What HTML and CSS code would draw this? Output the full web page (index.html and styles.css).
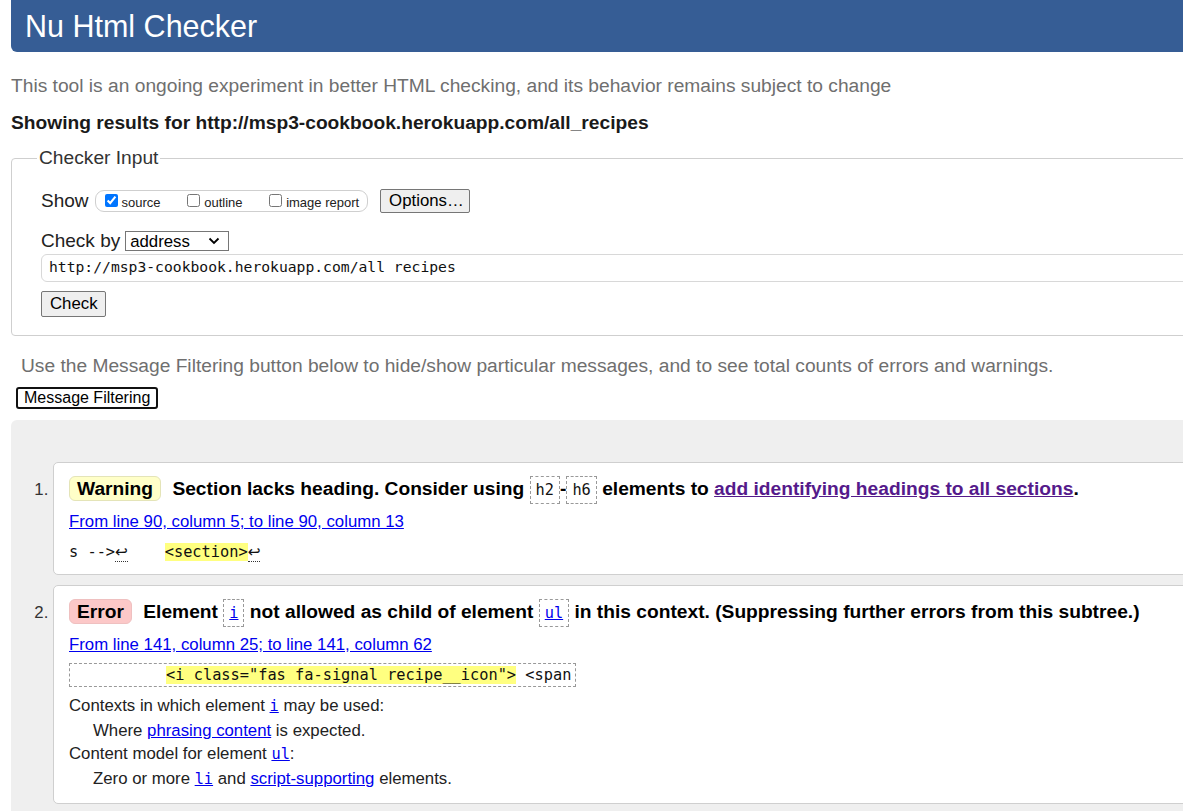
FILE: index.html
```html
<!DOCTYPE html>
<html lang="en">
<head>
<meta charset="utf-8">
<title>Showing results for http://msp3-cookbook.herokuapp.com/all_recipes - Nu Html Checker</title>
<link rel="stylesheet" href="styles.css">
</head>
<body>
<div class="page">
  <header class="masthead"><h1 class="title">Nu Html Checker</h1></header>
  <p class="tagline">This tool is an ongoing experiment in better HTML checking, and its behavior remains subject to change</p>
  <p class="results-for">Showing results for http://msp3-cookbook.herokuapp.com/all_recipes</p>

  <form class="checker-form">
    <fieldset class="checker-input">
      <legend class="legend">Checker Input</legend>
      <div class="row">
        <span class="row-label">Show</span>
        <span class="show-opts">
          <label class="opt"><input type="checkbox" checked>source</label>
          <label class="opt"><input type="checkbox">outline</label>
          <label class="opt"><input type="checkbox">image report</label>
        </span>
        <button type="button" class="btn btn-options">Options…</button>
      </div>
      <div class="row row-checkby">
        <label class="row-label">Check by</label>
        <span class="select-wrap">
          <select class="select"><option>address</option></select>
          <svg class="chev" width="12" height="8" viewBox="0 0 12 8"><path d="M1.5 1.5 L6 6 L10.5 1.5" fill="none" stroke="#000" stroke-width="1.8"/></svg>
        </span>
      </div>
      <input class="url" type="text" value="http://msp3-cookbook.herokuapp.com/all_recipes">
      <button type="button" class="btn btn-check">Check</button>
    </fieldset>
  </form>

  <p class="filter-note">Use the Message Filtering button below to hide/show particular messages, and to see total counts of errors and warnings.</p>
  <button type="button" class="filter-btn">Message Filtering</button>

  <div class="results">
    <ol class="messages">
      <li class="msg">
        <p class="msg-head"><strong class="badge badge-warning">Warning</strong> <span class="msg-text">Section lacks heading. Consider using <code class="chip">h2</code>-<code class="chip">h6</code> elements to <a class="visited" href="#">add identifying headings to all sections</a>.</span></p>
        <p class="location"><a href="#">From line 90, column 5; to line 90, column 13</a></p>
        <p class="extract"><code class="src">s --&gt;<span class="lf">↩</span>    <b class="hl">&lt;section&gt;</b><span class="lf">↩</span></code></p>
      </li>
      <li class="msg">
        <p class="msg-head"><strong class="badge badge-error">Error</strong> <span class="msg-text">Element <code class="chip"><a href="#">i</a></code> not allowed as child of element <code class="chip"><a href="#">ul</a></code> in this context. (Suppressing further errors from this subtree.)</span></p>
        <p class="location"><a href="#">From line 141, column 25; to line 141, column 62</a></p>
        <p class="extract-box"><code class="src">          <b class="hl">&lt;i class="fas fa-signal recipe__icon"&gt;</b> &lt;span</code></p>
        <dl class="details">
          <dt>Contexts in which element <a href="#"><code class="mono">i</code></a> may be used:</dt>
          <dd>Where <a href="#">phrasing content</a> is expected.</dd>
          <dt>Content model for element <a href="#"><code class="mono">ul</code></a>:</dt>
          <dd>Zero or more <a href="#"><code class="mono">li</code></a> and <a href="#">script-supporting</a> elements.</dd>
        </dl>
      </li>
    </ol>
  </div>
</div>
</body>
</html>
```

FILE: styles.css
```css
html {
  overflow: hidden;
}

body {
  margin: 0;
  background: #fff;
  font-family: "Liberation Sans", Arial, sans-serif;
  color: #222;
}

.page {
  width: 1260px;
  padding-left: 11px;
}

.masthead {
  background: #365d95;
  height: 52px;
  border-radius: 0 0 6px 6px;
  padding-left: 14px;
}

.title {
  margin: 0;
  font-size: 30.5px;
  font-weight: normal;
  line-height: 52px;
  color: #fff;
}

.tagline {
  margin: 22px 0 0;
  font-size: 19.2px;
  line-height: 24px;
  color: #6f6f6f;
}

.results-for {
  margin: 13px 0 0;
  font-size: 19.2px;
  line-height: 24px;
  font-weight: bold;
  color: #1a1a1a;
}

.checker-form {
  margin: 11px 0 0;
}

.checker-input {
  margin: 0;
  border: 1px solid #cfcfcf;
  border-radius: 4px;
  padding: 19px 28px 18px 29px;
  min-width: 0;
}

.legend {
  font-size: 19.2px;
  line-height: 24px;
  color: #333;
  padding: 0 2px;
  margin-left: -4px;
}

.row {
  display: flex;
  align-items: center;
  height: 24px;
  gap: 6px;
}

.row-label {
  font-size: 19px;
  line-height: 24px;
  color: #222;
}

.show-opts {
  display: inline-block;
  height: 20px;
  line-height: 20px;
  border: 1px solid #cfcfcf;
  border-radius: 9px;
  padding: 0 8px 0 5px;
  font-size: 13px;
  color: #222;
}

.opt {
  margin-right: 19px;
}

.opt:last-child {
  margin-right: 0;
}

.opt input {
  margin: 3px 4px 3px 4px;
}

.btn {
  font-family: "Liberation Sans", Arial, sans-serif;
  font-size: 16.8px;
  color: #000;
  background: #efefef;
  border: 1px solid #767676;
  border-radius: 2px;
  padding: 0 8px;
  box-sizing: border-box;
}

.btn-options {
  height: 24px;
  width: 90px;
  margin-left: 6px;
}

.row-checkby {
  margin-top: 16px;
  gap: 5px;
}

.select-wrap {
  position: relative;
  display: inline-block;
  height: 20px;
}

.select {
  appearance: none;
  -webkit-appearance: none;
  width: 104px;
  height: 20px;
  box-sizing: border-box;
  border: 1px solid #767676;
  border-radius: 0;
  background: #fff;
  font-family: "Liberation Sans", Arial, sans-serif;
  font-size: 16.8px;
  color: #000;
  padding: 0 0 0 4px;
  margin: 0;
  display: block;
}

.chev {
  position: absolute;
  right: 9px;
  top: 6px;
  pointer-events: none;
}

.url {
  display: block;
  box-sizing: border-box;
  width: 100%;
  height: 28px;
  margin: 1px 0 0;
  border: 1px solid #d8d8d8;
  border-radius: 6px;
  padding: 0 7px 3px;
  font-family: "DejaVu Sans Mono", "Liberation Mono", monospace;
  font-size: 14.7px;
  line-height: 24px;
  color: #111;
  background: #fff;
}

.btn-check {
  display: block;
  margin-top: 9px;
  height: 26px;
  width: 65px;
}

.filter-note {
  margin: 18px 0 0 10px;
  font-size: 19.2px;
  line-height: 24px;
  color: #6f6f6f;
}

.filter-btn {
  display: block;
  margin: 9px 0 0 5px;
  height: 22px;
  box-sizing: border-box;
  border: 2px solid #111;
  border-radius: 3px;
  background: #fff;
  padding: 0 6px;
  font-family: "Liberation Sans", Arial, sans-serif;
  font-size: 16px;
  line-height: 18px;
  color: #000;
}

.results {
  margin-top: 11px;
  background: #efefef;
  border-radius: 6px 0 0 0;
  padding-bottom: 40px;
}

.messages {
  margin: 0;
  padding: 42px 0 0 42px;
  list-style: decimal;
  color: #333;
  font-size: 16.8px;
}

.msg {
  background: #fff;
  border: 1px solid #cfcfcf;
  border-radius: 5px;
  padding: 11px 15px 12px;
  margin-bottom: 10px;
}

.msg::marker {
  color: #333;
}

.msg-head {
  margin: 0;
  font-size: 19.2px;
  line-height: 29px;
  font-weight: bold;
  color: #000;
}

.badge {
  display: inline-block;
  line-height: 23px;
  padding: 0 7px;
  border: 1px solid #dedede;
  border-radius: 6px;
  margin-right: 6px;
  vertical-align: baseline;
}

.badge-warning {
  background: #ffffc8;
  border-color: #e4e4b8;
}

.badge-error {
  background: #fcc8c8;
  border-color: #efc0c0;
}

.chip {
  font-family: "DejaVu Sans Mono", "Liberation Mono", monospace;
  font-size: 15.3px;
  font-weight: normal;
  border: 1px dashed #999;
  padding: 4px 5px;
  color: #111;
}

a {
  color: #0000ee;
}

a.visited {
  color: #551a8b;
}

.location {
  margin: 7px 0 0;
  font-size: 16.8px;
  line-height: 20px;
}

.extract {
  margin: 10px 0 0;
  line-height: 20px;
}

.src {
  font-family: "DejaVu Sans Mono", "Liberation Mono", monospace;
  font-size: 15.3px;
  white-space: pre;
  color: #111;
}

.hl {
  font-weight: normal;
  background: #ffff80;
}

.lf {
  font-family: "DejaVu Sans", sans-serif;
  border-bottom: 1px dotted #333;
}

.extract-box {
  display: inline-block;
  margin: 8px 0 0;
  border: 1px dashed #999;
  padding: 0 4px;
  line-height: 22px;
}

.details {
  margin: 7px 0 0;
  font-size: 16.8px;
  line-height: 23px;
  color: #222;
}

.details dt {
  margin: 0;
}

.details dd {
  margin: 1px 0 0 24px;
}

.mono {
  font-family: "DejaVu Sans Mono", "Liberation Mono", monospace;
  font-size: 15.3px;
}
```
